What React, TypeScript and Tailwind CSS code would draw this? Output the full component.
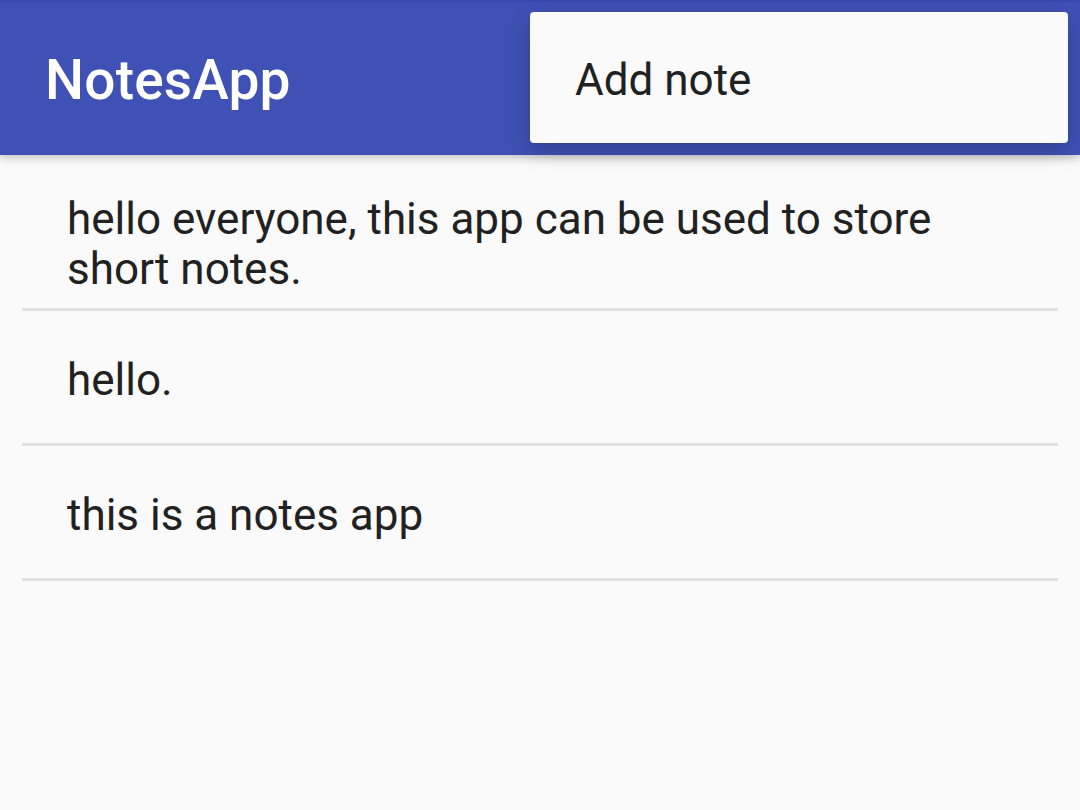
import React from 'react'

const notes = [
  'hello everyone, this app can be used to store short notes.',
  'hello.',
  'this is a notes app',
]

export default function App() {
  return (
    <div className="relative h-[810px] w-[1080px] overflow-hidden bg-[#fafafa] font-['Roboto',sans-serif]">
      <header className="relative z-10 flex h-[155px] items-center border-t-2 border-[#3949ab] bg-[#3f51b5] px-[45px] pt-[4px] shadow-[0_3px_8px_rgba(0,0,0,0.22)]">
        <h1 className="text-[55px] font-medium tracking-[0.2px] text-white">NotesApp</h1>
      </header>

      <ul className="px-[22px]">
        {notes.map((n, i) => (
          <li
            key={i}
            className={`flex border-b-[3px] border-[#e0e0e0] pl-[45px] pr-[60px] text-[44px] leading-[50px] text-[#212121] ${
              i === 0 ? 'h-[156px] items-start pt-[39px]' : 'h-[135px] items-center pt-[5px]'
            }`}
          >
            {n}
          </li>
        ))}
      </ul>

      <div className="absolute left-[530px] top-[12px] z-20 flex h-[131px] w-[538px] items-center rounded-[4px] bg-[#fafafa] pl-[45px] pt-[4px] shadow-[0_8px_22px_rgba(0,0,0,0.22)]">
        <span className="text-[44px] text-[#212121]">Add note</span>
      </div>
    </div>
  )
}
